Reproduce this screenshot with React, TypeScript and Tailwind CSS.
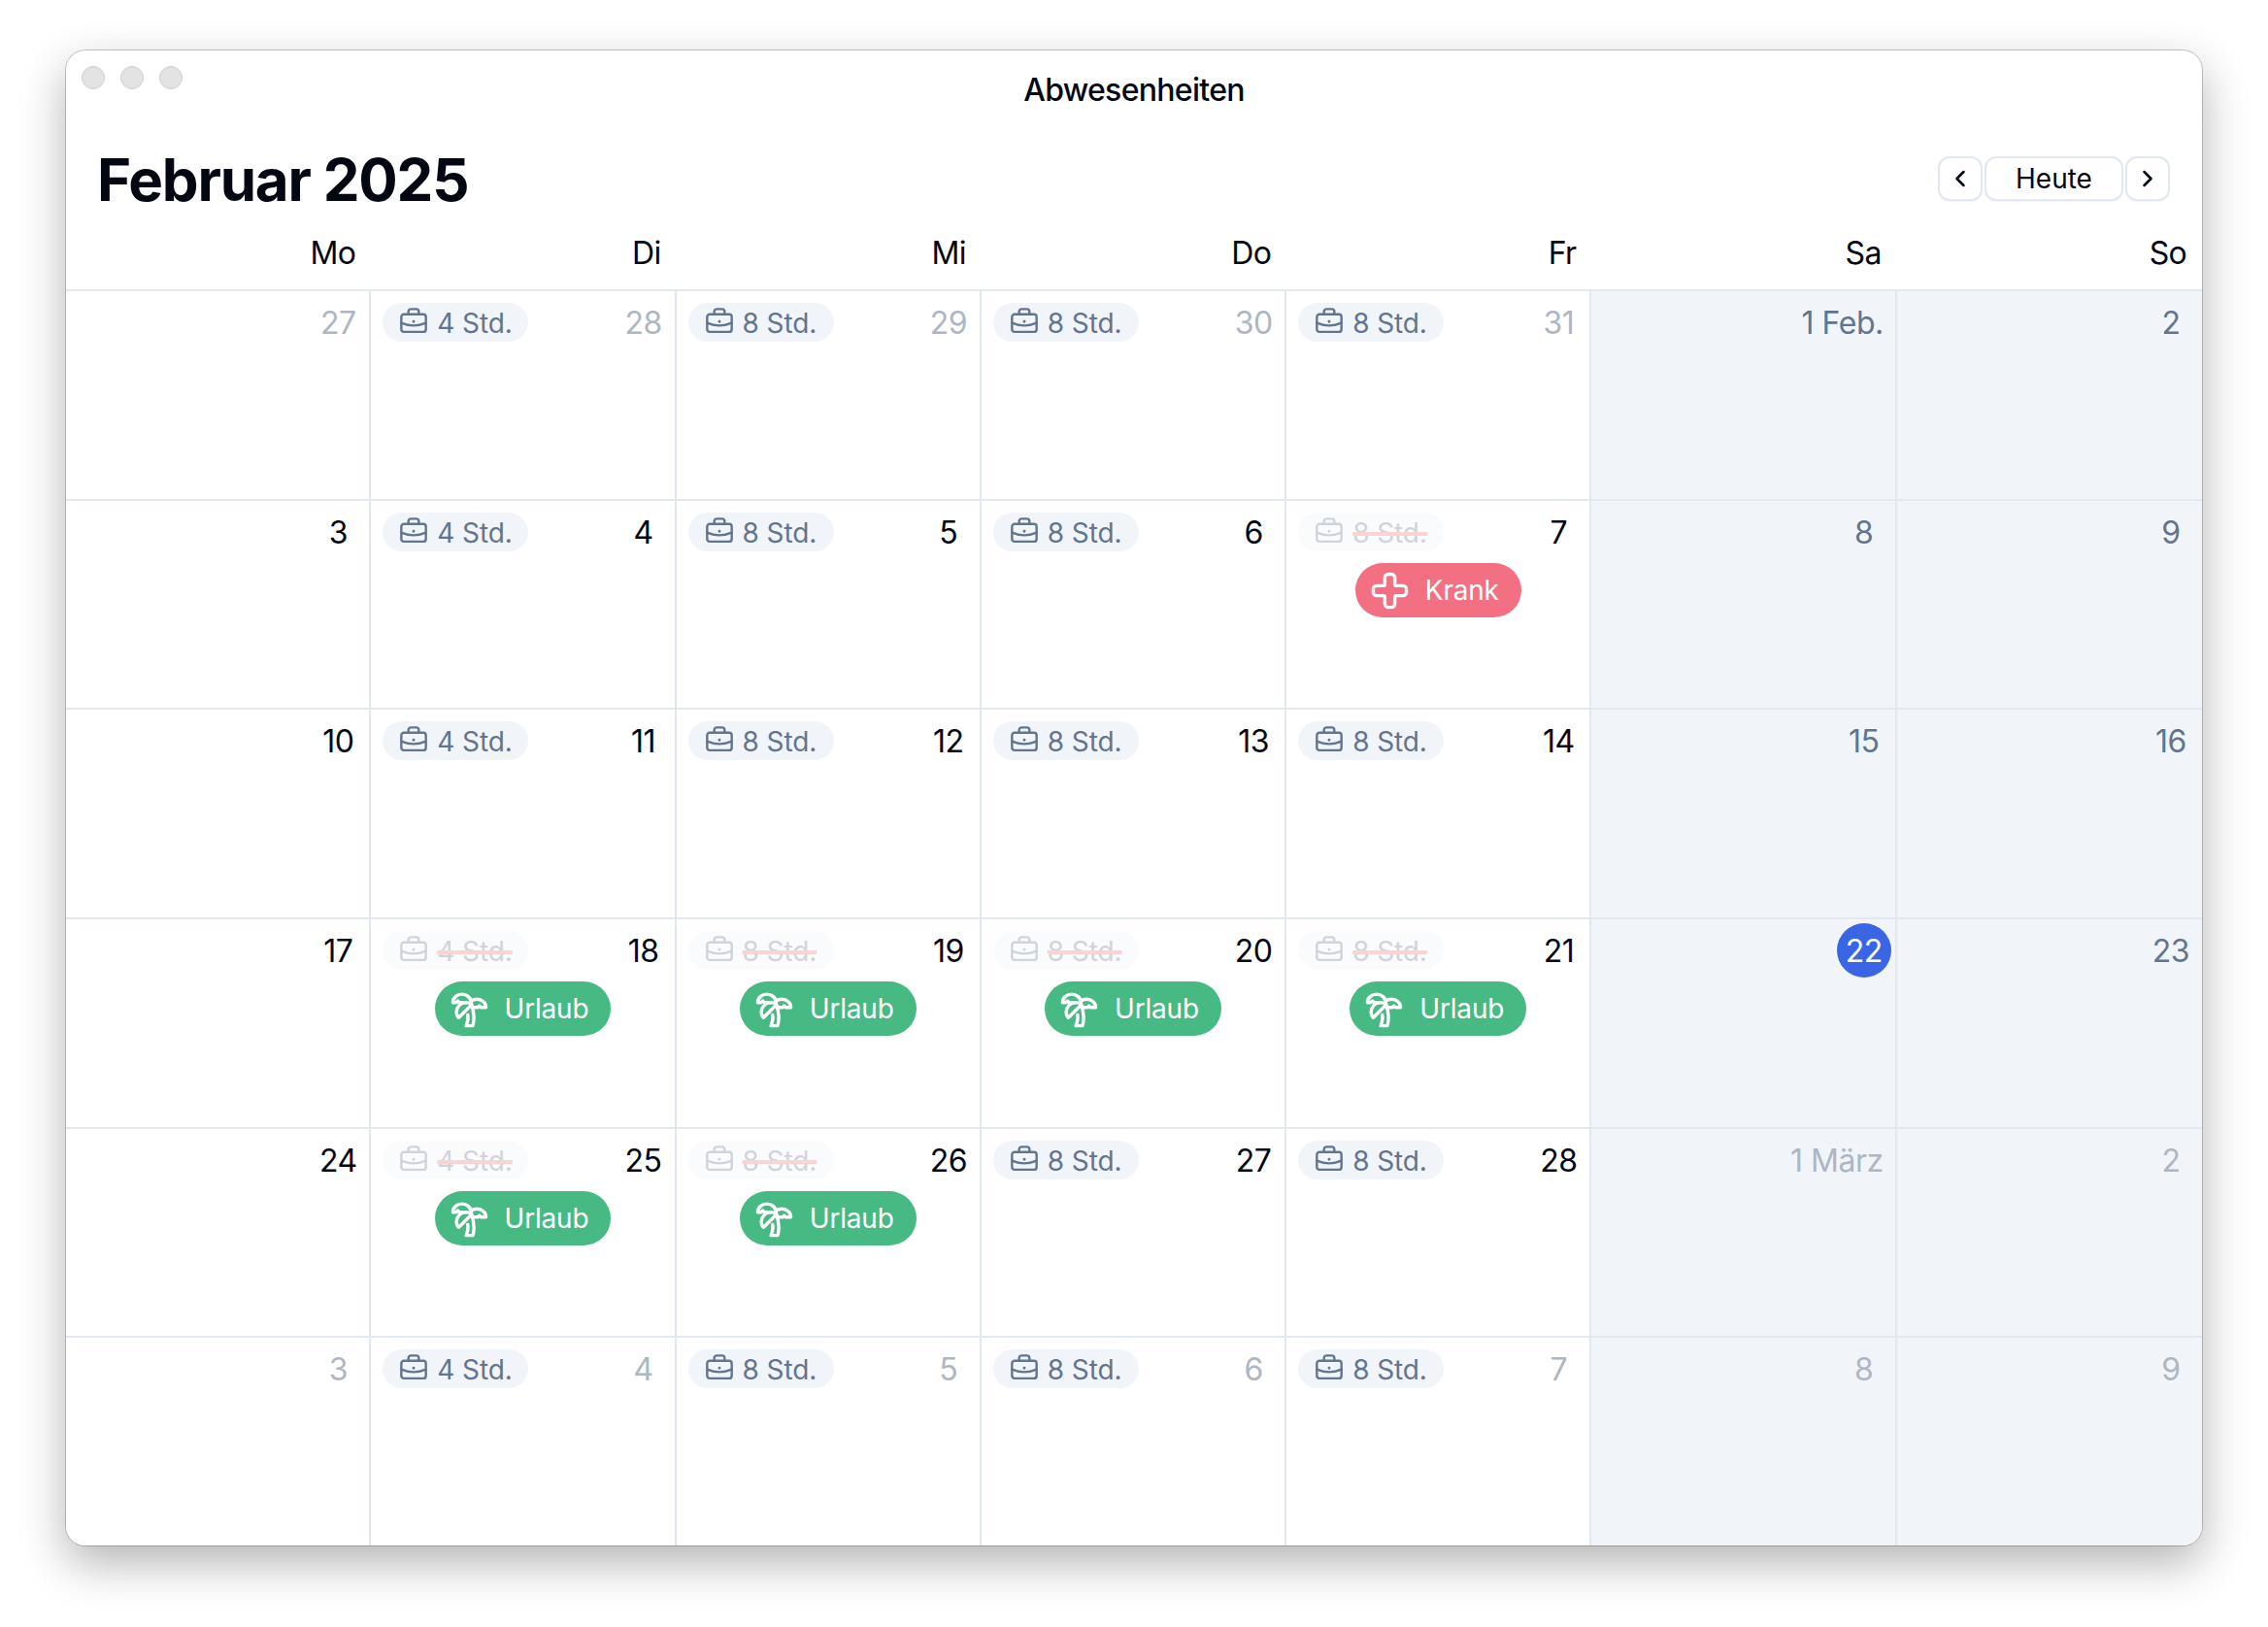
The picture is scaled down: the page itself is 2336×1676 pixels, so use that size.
import { ChevronLeft, ChevronRight, Cross, TreePalm } from "lucide-react";

type Tone = "main" | "off" | "weekend" | "today";
type Day = { label: string; tone: Tone; hours?: number; strike?: boolean; badge?: "Krank" | "Urlaub" };

const d = (label: string, tone: Tone, hours?: number, strike?: boolean, badge?: "Krank" | "Urlaub"): Day => ({ label, tone, hours, strike, badge });

const weekdays = ["Mo", "Di", "Mi", "Do", "Fr", "Sa", "So"];

const days: Day[] = [
  d("27", "off"), d("28", "off", 4), d("29", "off", 8), d("30", "off", 8), d("31", "off", 8), d("1 Feb.", "weekend"), d("2", "weekend"),
  d("3", "main"), d("4", "main", 4), d("5", "main", 8), d("6", "main", 8), d("7", "main", 8, true, "Krank"), d("8", "weekend"), d("9", "weekend"),
  d("10", "main"), d("11", "main", 4), d("12", "main", 8), d("13", "main", 8), d("14", "main", 8), d("15", "weekend"), d("16", "weekend"),
  d("17", "main"), d("18", "main", 4, true, "Urlaub"), d("19", "main", 8, true, "Urlaub"), d("20", "main", 8, true, "Urlaub"), d("21", "main", 8, true, "Urlaub"), d("22", "today"), d("23", "weekend"),
  d("24", "main"), d("25", "main", 4, true, "Urlaub"), d("26", "main", 8, true, "Urlaub"), d("27", "main", 8), d("28", "main", 8), d("1 März", "off"), d("2", "off"),
  d("3", "off"), d("4", "off", 4), d("5", "off", 8), d("6", "off", 8), d("7", "off", 8), d("8", "off"), d("9", "off"),
];

function Briefcase() {
  return (
    <svg width="32" height="32" viewBox="0 0 24 24" fill="none" stroke="currentColor" strokeWidth="1.8" strokeLinecap="round" strokeLinejoin="round" className="shrink-0">
      <rect x="2.5" y="5.8" width="19" height="13.6" rx="2" />
      <path d="M8 5.8V3.8a2 2 0 0 1 2-2h4a2 2 0 0 1 2 2v2" />
      <path d="M2.5 12.5c6 2.6 13 2.6 19 0" />
      <circle cx="12" cy="11.5" r="0.6" fill="currentColor" strokeWidth="1" />
    </svg>
  );
}

function HoursPill({ hours, strike }: { hours: number; strike?: boolean }) {
  return (
    <div className={`flex h-10 w-[150px] shrink-0 items-center gap-2 rounded-full bg-slate-100 pl-4 text-[28px] leading-10 tracking-[-0.1px] text-slate-500 ${strike ? "opacity-30" : ""}`}>
      <Briefcase />
      <span className={strike ? "whitespace-nowrap pt-px line-through decoration-[#f87171] decoration-4" : "whitespace-nowrap pt-px"}>{hours} Std.</span>
    </div>
  );
}

function Badge({ kind }: { kind: "Krank" | "Urlaub" }) {
  const krank = kind === "Krank";
  return (
    <div className={`flex h-14 items-center gap-4 rounded-full pl-[15px] pr-[23px] text-[28px] font-normal tracking-[-0.2px] text-white ${krank ? "bg-[#f36f82]" : "bg-[#47b983]"}`}>
      {krank ? <Cross size={41} strokeWidth={2} /> : <TreePalm size={41} strokeWidth={2} />}
      <span>{kind}</span>
    </div>
  );
}

function DateLabel({ day }: { day: Day }) {
  const color = {
    main: "text-[#030712]",
    off: "text-[#aeb6c3]",
    weekend: "text-slate-500",
    today: "bg-[#3a66e6] text-white",
  }[day.tone];
  return (
    <div className={`-mr-2 -mt-2 ml-auto flex h-14 min-w-14 shrink-0 items-center justify-center whitespace-nowrap rounded-full px-2 pt-[2px] text-[32px] tracking-[-0.5px] ${color}`}>
      {day.label}
    </div>
  );
}

function Cell({ day, index }: { day: Day; index: number }) {
  const col = index % 7;
  const isWeekend = col >= 5;
  const lastRow = index >= 35;
  return (
    <div className={`flex flex-col items-center gap-3 border-slate-200 p-3 ${col < 6 ? "border-r-2" : ""} ${lastRow ? "" : "border-b-2"} ${isWeekend ? "bg-slate-100" : "bg-white"}`}>
      <div className="flex h-10 w-full items-start justify-between">
        {day.hours ? <HoursPill hours={day.hours} strike={day.strike} /> : null}
        <DateLabel day={day} />
      </div>
      {day.badge ? <Badge kind={day.badge} /> : null}
    </div>
  );
}

function NavButton({ children, wide }: { children: React.ReactNode; wide?: boolean }) {
  return (
    <div className={`flex h-[46px] items-center justify-center rounded-xl border-2 border-slate-200 bg-white text-[28px] text-[#030712] shadow-[0_1px_2px_rgba(0,0,0,0.05)] ${wide ? "w-[143px]" : "w-[46px]"}`}>
      {children}
    </div>
  );
}

export default function App() {
  return (
    <div className="h-[1676px] w-[2336px] overflow-hidden bg-white pl-[68px] pt-[52px] font-['Inter',sans-serif]">
      <div className="flex h-[1540px] w-[2200px] flex-col overflow-hidden rounded-[20px] bg-white shadow-[0_18px_48px_rgba(0,0,0,0.3),0_0_0_1px_rgba(0,0,0,0.2)]">
        <div className="grid h-[70px] shrink-0 grid-cols-3">
          <div className="flex items-start gap-4 pl-4 pt-4">
            <span className="h-6 w-6 rounded-full border border-[#cfcfcf] bg-[#e3e3e3]" />
            <span className="h-6 w-6 rounded-full border border-[#cfcfcf] bg-[#e3e3e3]" />
            <span className="h-6 w-6 rounded-full border border-[#cfcfcf] bg-[#e3e3e3]" />
          </div>
          <div className="pt-[17px] text-center text-[32px] font-medium leading-12 tracking-[-0.7px] text-[#030712]">Abwesenheiten</div>
        </div>
        <div className="flex h-[115px] shrink-0 items-center justify-between pl-8 pr-[33px] pt-[9px]">
          <h1 className="pt-[2px] text-[60px] font-bold leading-[72px] tracking-[-1.2px] text-[#030712]">Februar 2025</h1>
          <div className="flex gap-[2px]">
            <NavButton><ChevronLeft size={28} strokeWidth={2.2} /></NavButton>
            <NavButton wide>Heute</NavButton>
            <NavButton><ChevronRight size={28} strokeWidth={2.2} /></NavButton>
          </div>
        </div>
        <div className="grid h-[63px] shrink-0 grid-cols-7 border-b-2 border-slate-200">
          {weekdays.map((w) => (
            <div key={w} className="pr-4 text-right text-[32px] leading-12 tracking-[-0.7px] text-[#030712]">{w}</div>
          ))}
        </div>
        <div className="grid min-h-0 flex-1 grid-cols-7 grid-rows-[216px_215px_216px_216px_215px_1fr]">
          {days.map((day, i) => (
            <Cell key={i} day={day} index={i} />
          ))}
        </div>
      </div>
    </div>
  );
}
